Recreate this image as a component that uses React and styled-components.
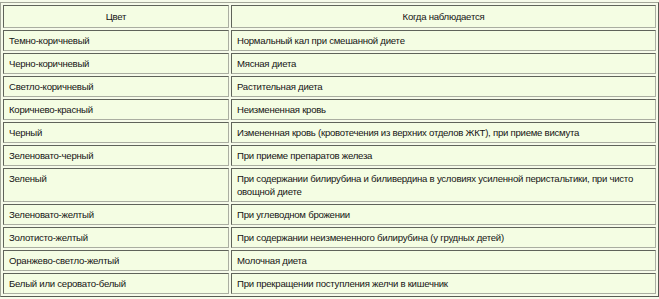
import React from "react";
import styled, { createGlobalStyle } from "styled-components";

const GlobalStyle = createGlobalStyle`
  html, body {
    margin: 0;
    padding: 0;
    background: #f6fbea;
  }
  body {
    font-family: "Liberation Sans", Arial, sans-serif;
    font-size: 9.6px;
    letter-spacing: -0.25px;
    color: #141414;
  }
`;

const Table = styled.table`
  width: 659px;
  margin-top: 2px;
  table-layout: fixed;
  border-collapse: separate;
  border-spacing: 2px;
  border-style: solid;
  border-width: 1px;
  border-color: #a3a799 #575b52 #575b52 #a3a799;
  background: #f6fbea;
`;

const HeadCell = styled.th`
  box-sizing: border-box;
  width: ${(p) => p.$width || "auto"};
  padding: 4px 5px;
  line-height: 13px;
  font-weight: normal;
  text-align: center;
  background: #f4fde3;
  border-style: solid;
  border-width: 1px;
  border-color: #5f635a #aaaea1 #aaaea1 #5f635a;
`;

const Cell = styled.td`
  box-sizing: border-box;
  padding: 3px 5px;
  line-height: 13px;
  vertical-align: top;
  background: #f4fde3;
  border-style: solid;
  border-width: 1px;
  border-color: #5f635a #aaaea1 #aaaea1 #5f635a;
`;

const rows = [
  ["Темно-коричневый", "Нормальный кал при смешанной диете"],
  ["Черно-коричневый", "Мясная диета"],
  ["Светло-коричневый", "Растительная диета"],
  ["Коричнево-красный", "Неизмененная кровь"],
  ["Черный", "Измененная кровь (кровотечения из верхних отделов ЖКТ), при приеме висмута"],
  ["Зеленовато-черный", "При приеме препаратов железа"],
  ["Зеленый", "При содержании билирубина и биливердина в условиях усиленной перистальтики, при чисто овощной диете"],
  ["Зеленовато-желтый", "При углеводном брожении"],
  ["Золотисто-желтый", "При содержании неизмененного билирубина (у грудных детей)"],
  ["Оранжево-светло-желтый", "Молочная диета"],
  ["Белый или серовато-белый", "При прекращении поступления желчи в кишечник"],
];

export default function App() {
  return (
    <>
      <GlobalStyle />
      <Table>
        <thead>
          <tr>
            <HeadCell $width="226px">Цвет</HeadCell>
            <HeadCell>Когда наблюдается</HeadCell>
          </tr>
        </thead>
        <tbody>
          {rows.map(([color, when]) => (
            <tr key={color}>
              <Cell>{color}</Cell>
              <Cell>{when}</Cell>
            </tr>
          ))}
        </tbody>
      </Table>
    </>
  );
}
